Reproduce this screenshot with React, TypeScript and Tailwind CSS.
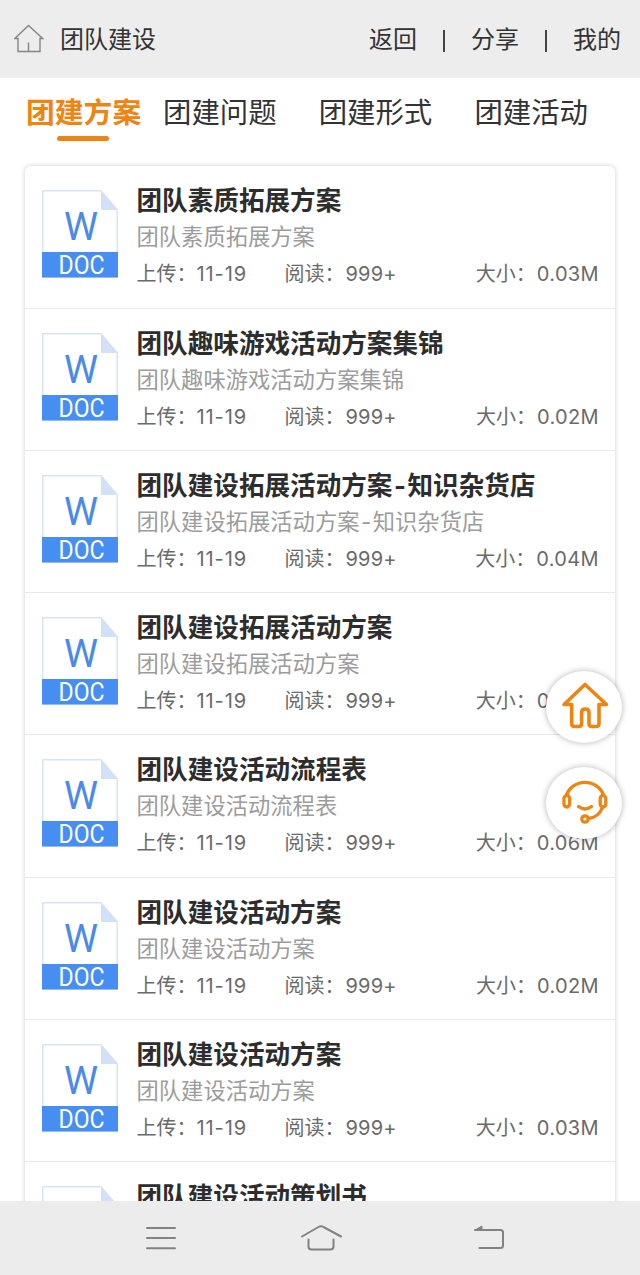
import React from "react";

type Doc = {
  title: string;
  size: string;
};

const tabs = ["团建方案", "团建问题", "团建形式", "团建活动"];

const docs: Doc[] = [
  { title: "团队素质拓展方案", size: "0.03M" },
  { title: "团队趣味游戏活动方案集锦", size: "0.02M" },
  { title: "团队建设拓展活动方案-知识杂货店", size: "0.04M" },
  { title: "团队建设拓展活动方案", size: "0.03M" },
  { title: "团队建设活动流程表", size: "0.06M" },
  { title: "团队建设活动方案", size: "0.02M" },
  { title: "团队建设活动方案", size: "0.03M" },
  { title: "团队建设活动策划书", size: "0.03M" },
];

function DocIcon() {
  return (
    <svg className="mt-6 h-[88px] w-[76px] shrink-0" viewBox="0 0 76 88">
      <path d="M.75.75H59L75.25 20V87H.75z" fill="#fff" stroke="#d9e4f2" strokeWidth="1.5" />
      <path d="M59 .5 76 20H59z" fill="#d3e1f8" />
      <rect y="62" width="76" height="25.5" fill="#478ef2" />
      <text
        x="39"
        y="49.5"
        textAnchor="middle"
        textLength="34"
        lengthAdjust="spacingAndGlyphs"
        fontSize="38"
        fill="#4a8ae8"
        className="font-['Roboto',sans-serif]"
      >
        W
      </text>
      <text
        x="39.5"
        y="84.2"
        textAnchor="middle"
        textLength="46"
        lengthAdjust="spacingAndGlyphs"
        fontSize="26"
        fill="#fff"
        className="font-['Roboto',sans-serif]"
      >
        DOC
      </text>
    </svg>
  );
}

// wider dash between the CJK parts of a name
function DocName({ name }: { name: string }) {
  const [head, tail] = name.split("-");
  return (
    <>
      {head}
      {tail && <span className="mx-[1.5px]">-</span>}
      {tail}
    </>
  );
}

function DocRow({ doc }: { doc: Doc }) {
  return (
    <li className="flex h-[142.3px] shrink-0 border-b border-[#e9e9e9] pr-4 pl-[17px]">
      <DocIcon />
      <div className="ml-[18.5px] flex-1 pt-4 whitespace-nowrap">
        <h2 className="h-[36px] text-[25.6px] leading-[38px] font-bold text-[#2d2d2d]">
          <DocName name={doc.title} />
        </h2>
        <p className="h-[37px] text-[22.3px] leading-[37px] text-[#9c9c9c]">
          <DocName name={doc.title} />
        </p>
        <div className="flex h-[37px] text-[20px] leading-[38px] text-[#6a6a6a]">
          <span className="w-[148px]">
            上传：<span className="tracking-[0.9px]">11-19</span>
          </span>
          <span>
            阅读：<span className="ml-px tracking-[0.2px]">999+</span>
          </span>
          <span className="ml-auto">
            大小：<span className="ml-px tracking-[0.35px]">{doc.size}</span>
          </span>
        </div>
      </div>
    </li>
  );
}

function App() {
  return (
    <div className="relative flex h-[1275px] w-[640px] flex-col overflow-hidden bg-white font-['Inter','Noto_Sans_CJK_SC',sans-serif]">
      <header className="flex h-[78px] shrink-0 items-center bg-[#ededed] pr-[19px] pl-3.5 text-[24px] text-[#333]">
        <svg className="h-[30px] w-[30px]" viewBox="0 0 30 30" fill="none" stroke="#858585" strokeWidth="1.4">
          <path d="M4 14.5H.8L14.5 1.5 28.7 14.5H26V27.5H4zM14.5 27.5V18.5" />
        </svg>
        <h1 className="ml-4 pt-px">团队建设</h1>
        <nav className="ml-auto flex items-center pt-px">
          <a href="#">返回</a>
          <span className="mx-[26px] mt-0.5 h-[22px] w-[2px] bg-[#444]" />
          <a href="#">分享</a>
          <span className="mx-[26px] mt-0.5 h-[22px] w-[2px] bg-[#444]" />
          <a href="#">我的</a>
        </nav>
      </header>

      <nav className="flex h-[79px] shrink-0 pl-[26px] text-[28.4px] text-[#333]">
        {tabs.map((tab, i) => (
          <a
            key={tab}
            href="#"
            className={
              i === 0
                ? "flex w-[137px] flex-col text-[28.8px] font-bold text-[#ee8412]"
                : "flex w-[155.7px] flex-col"
            }
          >
            <span className="mt-3 h-[46px] leading-[46px]">{tab}</span>
            {i === 0 && <span className="ml-[31px] h-[4.5px] w-[52px] rounded-full bg-[#ee8412]" />}
          </a>
        ))}
      </nav>

      <main className="min-h-0 flex-1 overflow-hidden px-[25px] pt-[9.3px]">
        <ul className="rounded-md bg-white shadow-[0_0_5px_rgba(0,0,0,0.2)]">
          {docs.map((doc, i) => (
            <DocRow key={i} doc={doc} />
          ))}
        </ul>
      </main>

      <footer className="z-10 flex h-[74px] shrink-0 bg-[#ececec]">
        <svg className="h-[74px] w-[640px]" viewBox="0 0 640 74" fill="none" stroke="#828282" strokeWidth="2" strokeLinecap="round" strokeLinejoin="round">
          <path d="M147 27H175M147 37H175M147 47.3H175" />
          <path d="M302 35.5 318.5 26Q321 24.5 323.5 26L341 35.5M308.5 38.5V45.5Q308.5 48.5 311.5 48.5H330.5Q333.5 48.5 333.5 45.5V38.5" />
          <path d="M475 29H500.5Q503 29 503 31.5V44.5Q503 47 500.5 47H479.5" />
          <path d="M475 29 482 25V29z" fill="#828282" strokeWidth="1" />
        </svg>
      </footer>

      <div className="absolute top-[671px] left-[546px] flex flex-col gap-6">
        <button type="button" aria-label="首页" className="h-[72px] w-[76px] rounded-[50%] bg-white shadow-[0_0_6px_rgba(0,0,0,0.3)]">
          <svg className="h-[72px] w-[76px]" viewBox="0 0 76 72" fill="none" stroke="#ee8412" strokeWidth="3.6" strokeLinecap="round" strokeLinejoin="round">
            <path d="M39 13.5 18 33.5H25.7V52.5Q25.7 55.5 28.7 55.5H32.6Q35.6 55.5 35.6 52.5V41.5Q35.6 38 39.3 38Q43 38 43 41.5V52.5Q43 55.5 46 55.5H50Q53 55.5 53 52.5V33.5H60.5z" />
          </svg>
        </button>
        <button type="button" aria-label="客服" className="h-[72px] w-[76px] rounded-[50%] bg-white shadow-[0_0_6px_rgba(0,0,0,0.3)]">
          <svg className="h-[72px] w-[76px]" viewBox="0 0 76 72" fill="none" stroke="#ee8412" strokeWidth="3.3" strokeLinecap="round" strokeLinejoin="round">
            <path d="M20.5 28A19.5 18.5 0 0 1 57.5 28M56.5 40.5Q52.5 50.5 42.5 51.5M32.5 39.5Q39 44.5 45.5 39.5" />
            <rect x="18" y="28.5" width="5.6" height="11.5" rx="2.8" />
            <rect x="54.2" y="28.5" width="5.6" height="11.5" rx="2.8" />
            <circle cx="39" cy="52" r="3.2" />
          </svg>
        </button>
      </div>
    </div>
  );
}

export default App;
